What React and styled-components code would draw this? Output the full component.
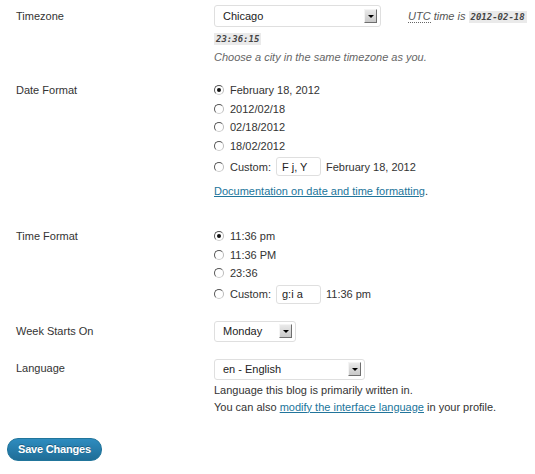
import React from "react";
import styled, { createGlobalStyle } from "styled-components";

const GlobalStyle = createGlobalStyle`
  body {
    margin: 0;
    background: #fff;
    font-family: "Liberation Sans", Arial, sans-serif;
    font-size: 11px;
    color: #333;
  }
`;

const Page = styled.div`
  width: 535px;
  height: 474px;
  padding-top: 5px;
  box-sizing: border-box;
  overflow: hidden;
`;

const FormRow = styled.div`
  display: grid;
  grid-template-columns: 198px 1fr;
  padding-left: 16px;
  margin-top: ${(p) => p.$gap || 0}px;
`;

const Label = styled.div`
  line-height: ${(p) => p.$lh || 18.5}px;
  color: #333;
`;

const Field = styled.div`
  display: flex;
  flex-direction: column;
  align-items: flex-start;
`;

const Line = styled.div`
  display: flex;
  align-items: center;
`;

const SelectBox = styled.div`
  box-sizing: border-box;
  width: ${(p) => p.$width}px;
  height: ${(p) => p.$height || 21}px;
  border: 1px solid #dfdfdf;
  border-radius: 3px;
  background: #fff;
  display: flex;
  align-items: center;
  justify-content: space-between;
  padding: 0 2px 0 8px;
  color: #222;
`;

const ArrowButton = styled.span`
  box-sizing: border-box;
  width: 13px;
  height: 14px;
  margin-right: 1px;
  border: 1px solid;
  border-color: #f4f4f4 #6f6f6f #6f6f6f #f4f4f4;
  background: linear-gradient(#e9e9e9, #c9c9c9);
  display: flex;
  align-items: center;
  justify-content: center;
  &::after {
    content: "";
    border-left: 3px solid transparent;
    border-right: 3px solid transparent;
    border-top: 3px solid #000;
  }
`;

const UtcText = styled.span`
  margin-left: 27px;
  color: #555;
  font-style: italic;
  white-space: nowrap;
`;

const Abbr = styled.abbr`
  text-decoration: none;
  border-bottom: 1px dotted #666;
`;

const Code = styled.code`
  display: inline-block;
  font-family: "DejaVu Sans Mono", "Liberation Mono", monospace;
  font-size: 9px;
  font-style: italic;
  font-weight: 600;
  line-height: 12px;
  padding: 0 2px;
  background: #eaeaea;
  color: #444;
  margin-top: ${(p) => p.$mt || 0}px;
`;

const Description = styled.div`
  font-style: ${(p) => (p.$plain ? "normal" : "italic")};
  color: ${(p) => (p.$plain ? "#333" : "#666")};
  line-height: ${(p) => p.$lh || 14}px;
  margin-top: ${(p) => p.$mt || 0}px;
`;

const RadioRow = styled.label`
  display: flex;
  align-items: center;
  height: ${(p) => (p.$custom ? 23 : 18.5)}px;
  color: #333;
`;

const Radio = styled.span`
  box-sizing: border-box;
  width: 10px;
  height: 10px;
  border-radius: 50%;
  border: 1px solid #555;
  border-right-color: #bbb;
  border-bottom-color: #ccc;
  background: #fff;
  margin-right: 6px;
  display: flex;
  align-items: center;
  justify-content: center;
  &::after {
    content: "";
    width: 4px;
    height: 4px;
    border-radius: 50%;
    background: ${(p) => (p.$checked ? "#111" : "transparent")};
  }
`;

const TextInput = styled.span`
  box-sizing: border-box;
  display: inline-flex;
  align-items: center;
  width: 45px;
  height: 19px;
  margin: 0 5px;
  padding-left: 5px;
  border: 1px solid #dfdfdf;
  border-radius: 3px;
  background: #fff;
  color: #222;
`;

const Link = styled.a`
  color: #21759b;
  text-decoration: underline;
  cursor: pointer;
`;

const DocLine = styled.div`
  margin-top: 6px;
  line-height: 14px;
`;

const ButtonBar = styled.div`
  padding-left: 7px;
  margin-top: 22px;
`;

const SaveButton = styled.button`
  height: 23px;
  padding: 0 10px;
  border: 1px solid #21759b;
  border-radius: 11px;
  background: linear-gradient(#2e8cbf, #1f6d97);
  color: #fff;
  font-family: "Liberation Sans", Arial, sans-serif;
  font-size: 11px;
  font-weight: bold;
  letter-spacing: -0.2px;
  text-shadow: 0 -1px 0 rgba(0, 0, 0, 0.3);
  cursor: pointer;
`;

const dateOptions = ["February 18, 2012", "2012/02/18", "02/18/2012", "18/02/2012"];
const timeOptions = ["11:36 pm", "11:36 PM", "23:36"];

function Select({ value, width, height }) {
  return (
    <SelectBox $width={width} $height={height}>
      <span>{value}</span>
      <ArrowButton />
    </SelectBox>
  );
}

function RadioList({ options, customValue, preview }) {
  return (
    <Field>
      {options.map((opt, i) => (
        <RadioRow key={opt}>
          <Radio $checked={i === 0} />
          {opt}
        </RadioRow>
      ))}
      <RadioRow $custom>
        <Radio />
        Custom:
        <TextInput>{customValue}</TextInput>
        {preview}
      </RadioRow>
    </Field>
  );
}

export default function App() {
  return (
    <Page>
      <GlobalStyle />
      <FormRow>
        <Label $lh={22}>Timezone</Label>
        <Field>
          <Line>
            <Select value="Chicago" width={167} height={22} />
            <UtcText>
              <Abbr title="Coordinated Universal Time">UTC</Abbr> time is{" "}
              <Code>2012-02-18</Code>
            </UtcText>
          </Line>
          <Code $mt={6}>23:36:15</Code>
          <Description $mt={5}>Choose a city in the same timezone as you.</Description>
        </Field>
      </FormRow>

      <FormRow $gap={17}>
        <Label>Date Format</Label>
        <Field>
          <RadioList options={dateOptions} customValue="F j, Y" preview="February 18, 2012" />
          <DocLine>
            <Link>Documentation on date and time formatting</Link>.
          </DocLine>
        </Field>
      </FormRow>

      <FormRow $gap={29}>
        <Label>Time Format</Label>
        <RadioList options={timeOptions} customValue="g:i a" preview="11:36 pm" />
      </FormRow>

      <FormRow $gap={15}>
        <Label $lh={21}>Week Starts On</Label>
        <Field>
          <Select value="Monday" width={82} />
        </Field>
      </FormRow>

      <FormRow $gap={17}>
        <Label $lh={19}>Language</Label>
        <Field>
          <Select value="en - English" width={151} />
          <Description $plain $lh={17} $mt={2}>
            Language this blog is primarily written in.
          </Description>
          <Description $plain $lh={17}>
            You can also <Link>modify the interface language</Link> in your profile.
          </Description>
        </Field>
      </FormRow>

      <ButtonBar>
        <SaveButton>Save Changes</SaveButton>
      </ButtonBar>
    </Page>
  );
}
